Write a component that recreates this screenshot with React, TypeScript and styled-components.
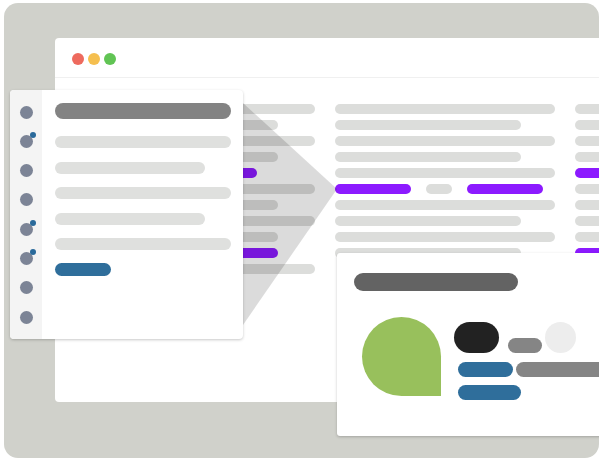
import styled, { createGlobalStyle } from "styled-components"

const Global = createGlobalStyle`
  html, body {
    margin: 0;
    padding: 0;
    background: #ffffff;
    font-family: "Liberation Sans", Arial, sans-serif;
  }
`

const Frame = styled.div`
  position: relative;
  box-sizing: border-box;
  margin: 3px 0 0 4px;
  width: 595px;
  height: 455px;
  padding: 35px 0 0 51px;
  background: #d0d1cb;
  border-radius: 14px;
  overflow: hidden;
`

const Window = styled.div`
  width: 600px;
  height: 364px;
  background: #ffffff;
  border-radius: 4px;
`

const WindowBar = styled.div`
  box-sizing: border-box;
  height: 40px;
  padding: 15px 0 0 17px;
  display: flex;
  gap: 4px;
  border-bottom: 1px solid #f0f0f0;
`

const Light = styled.span<{ $color: string }>`
  width: 12px;
  height: 12px;
  border-radius: 50%;
  background: ${(p) => p.$color};
`

const Content = styled.div`
  display: flex;
  gap: 20px;
  padding: 26px 0 0 40px;
`

const Column = styled.div`
  width: 220px;
  flex-shrink: 0;
  display: flex;
  flex-direction: column;
  gap: 6px;
`

const Row = styled.div`
  display: flex;
  gap: 15px;
`

const Bar = styled.span<{ $w: number; $purple?: boolean }>`
  width: ${(p) => p.$w}px;
  height: 10px;
  border-radius: 5px;
  background: ${(p) => (p.$purple ? "#8c1aff" : "#dcdddb")};
`

const Cone = styled.svg`
  position: absolute;
  left: 0;
  top: 0;
  pointer-events: none;
`

const SidePanel = styled.div`
  position: absolute;
  left: 6px;
  top: 87px;
  width: 233px;
  height: 249px;
  display: flex;
  background: #ffffff;
  border-radius: 4px;
  overflow: hidden;
  box-shadow: 0 1px 3px rgba(0, 0, 0, 0.22);
`

const Rail = styled.div`
  width: 32px;
  flex-shrink: 0;
  background: #f4f4f4;
  display: flex;
  flex-direction: column;
  align-items: center;
  padding-top: 15.5px;
  gap: 16.3px;
`

const Avatar = styled.span<{ $badge?: boolean }>`
  position: relative;
  width: 13px;
  height: 13px;
  border-radius: 50%;
  background: #7c8496;

  &::after {
    content: "";
    display: ${(p) => (p.$badge ? "block" : "none")};
    position: absolute;
    top: -2.5px;
    right: -3.3px;
    width: 6px;
    height: 6px;
    border-radius: 50%;
    background: #2a6a9b;
  }
`

const PanelBody = styled.div`
  flex: 1;
  padding: 13px 12px 0 13px;
  display: flex;
  flex-direction: column;
  align-items: flex-start;
`

const Heading = styled.div<{ $w: number; $h: number; $color: string }>`
  width: ${(p) => p.$w}px;
  height: ${(p) => p.$h}px;
  border-radius: ${(p) => p.$h / 2}px;
  background: ${(p) => p.$color};
`

const Lines = styled.div`
  margin-top: 17px;
  display: flex;
  flex-direction: column;
  gap: 13.5px;
`

const Line = styled.span<{ $w: number }>`
  display: block;
  width: ${(p) => p.$w}px;
  height: 12px;
  border-radius: 6px;
  background: #dfe0de;
`

const Pill = styled.span<{ $w: number; $h?: number; $color: string }>`
  display: block;
  flex-shrink: 0;
  width: ${(p) => p.$w}px;
  height: ${(p) => p.$h ?? 15}px;
  border-radius: ${(p) => (p.$h ?? 15) / 2}px;
  background: ${(p) => p.$color};
`

const PanelButton = styled(Pill)`
  margin-top: 13px;
`

const Tag = styled(Pill)`
  margin-left: 9px;
`

const Card = styled.div`
  position: absolute;
  left: 333px;
  top: 250px;
  width: 290px;
  height: 183px;
  box-sizing: border-box;
  padding: 20px 0 0 17px;
  background: #ffffff;
  border-radius: 3px;
  box-shadow: 0 1px 3px rgba(0, 0, 0, 0.22);
`

const CardBody = styled.div`
  display: flex;
  gap: 13px;
  margin: 26px 0 0 8px;
`

const Blob = styled.div`
  width: 79px;
  height: 79px;
  flex-shrink: 0;
  background: #98c05c;
  border-radius: 50% 50% 0 50%;
`

const Meta = styled.div`
  padding-top: 5px;
  display: flex;
  flex-direction: column;
`

const MetaTop = styled.div`
  display: flex;
  align-items: flex-end;
`

const MetaRow = styled.div<{ $top: number }>`
  display: flex;
  gap: 3px;
  padding-left: 4px;
  margin-top: ${(p) => p.$top}px;
`

const Ghost = styled.span`
  width: 31px;
  height: 31px;
  border-radius: 50%;
  background: #ededed;
  margin-left: 3px;
`

type Cell = { w: number; purple?: boolean }

const col1: Cell[][] = [
  [{ w: 220 }],
  [{ w: 183 }],
  [{ w: 220 }],
  [{ w: 183 }],
  [{ w: 162, purple: true }],
  [{ w: 220 }],
  [{ w: 183 }],
  [{ w: 220 }],
  [{ w: 183 }],
  [{ w: 183, purple: true }],
  [{ w: 220 }],
]

const col2: Cell[][] = [
  [{ w: 220 }],
  [{ w: 186 }],
  [{ w: 220 }],
  [{ w: 186 }],
  [{ w: 220 }],
  [{ w: 76, purple: true }, { w: 26 }, { w: 76, purple: true }],
  [{ w: 220 }],
  [{ w: 186 }],
  [{ w: 220 }],
  [{ w: 186 }],
]

const col3: Cell[][] = [
  [{ w: 220 }],
  [{ w: 220 }],
  [{ w: 220 }],
  [{ w: 220 }],
  [{ w: 220, purple: true }],
  [{ w: 220 }],
  [{ w: 220 }],
  [{ w: 220 }],
  [{ w: 220 }],
  [{ w: 220, purple: true }],
]

const rail = [false, true, false, false, true, true, false, false]

const App = () => {
  return (
    <>
      <Global />
      <Frame>
        <Window>
          <WindowBar>
            <Light $color="#ee6a5e" />
            <Light $color="#f5bf4f" />
            <Light $color="#61c454" />
          </WindowBar>
          <Content>
            {[col1, col2, col3].map((col, ci) => (
              <Column key={ci}>
                {col.map((row, ri) => (
                  <Row key={ri}>
                    {row.map((c, i) => (
                      <Bar key={i} $w={c.w} $purple={c.purple} />
                    ))}
                  </Row>
                ))}
              </Column>
            ))}
          </Content>
        </Window>

        <Cone width="595" height="455">
          <polygon points="239,100 333,186 239,322" fill="rgba(0,0,0,0.14)" />
        </Cone>

        <SidePanel>
          <Rail>
            {rail.map((b, i) => (
              <Avatar key={i} $badge={b} />
            ))}
          </Rail>
          <PanelBody>
            <Heading $w={176} $h={16} $color="#838383" />
            <Lines>
              <Line $w={176} />
              <Line $w={150} />
              <Line $w={176} />
              <Line $w={150} />
              <Line $w={176} />
            </Lines>
            <PanelButton $w={56} $h={13} $color="#2f6e9b" />
          </PanelBody>
        </SidePanel>

        <Card>
          <Heading $w={164} $h={18} $color="#636363" />
          <CardBody>
            <Blob />
            <Meta>
              <MetaTop>
                <Pill $w={45} $h={31} $color="#222222" />
                <Tag $w={34} $color="#858585" />
                <Ghost />
              </MetaTop>
              <MetaRow $top={9}>
                <Pill $w={55} $color="#2f6e9b" />
                <Pill $w={120} $color="#858585" />
              </MetaRow>
              <MetaRow $top={8}>
                <Pill $w={63} $color="#2f6e9b" />
              </MetaRow>
            </Meta>
          </CardBody>
        </Card>
      </Frame>
    </>
  )
}

export default App
